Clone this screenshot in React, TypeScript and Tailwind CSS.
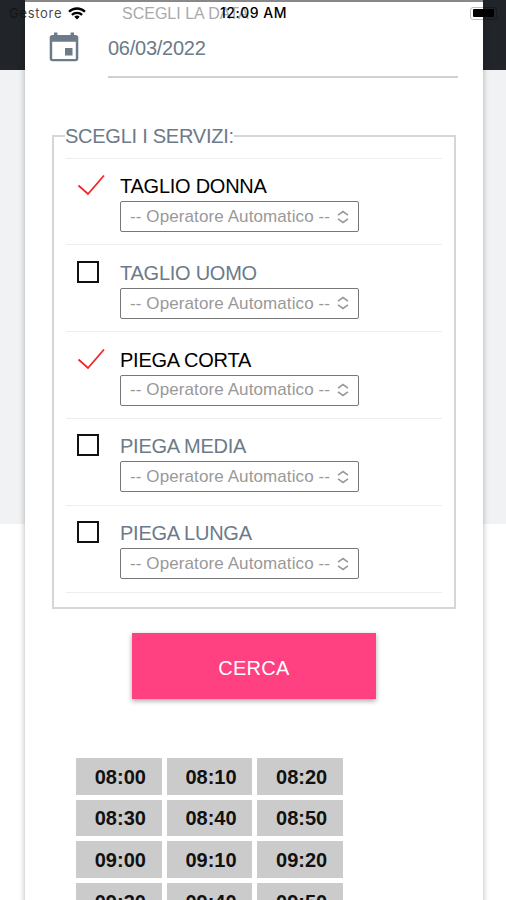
import React, { useState } from 'react'
import clsx from 'clsx'

type Service = { name: string; checked: boolean }

const initialServices: Service[] = [
  { name: 'TAGLIO DONNA', checked: true },
  { name: 'TAGLIO UOMO', checked: false },
  { name: 'PIEGA CORTA', checked: true },
  { name: 'PIEGA MEDIA', checked: false },
  { name: 'PIEGA LUNGA', checked: false },
]

const slots = [
  '08:00', '08:10', '08:20',
  '08:30', '08:40', '08:50',
  '09:00', '09:10', '09:20',
  '09:30', '09:40', '09:50',
]

const CalendarIcon = () => (
  <svg width="30" height="31" viewBox="0 0 30 31" className="shrink-0 text-[#6c7a89]">
    <path
      fill="currentColor"
      fillRule="evenodd"
      d="M5 .5h3.400V3h13.200V.5H25V3h1.500A2.800 2.800 0 0 1 29.300 5.800V26.500A2.800 2.800 0 0 1 26.500 29.300H3.500A2.800 2.800 0 0 1 .7 26.500V5.800A2.800 2.800 0 0 1 3.500 3H5zM3.200 9.700V27H26.800V9.700z"
    />
    <rect x="16" y="16" width="7.500" height="7.500" fill="currentColor" />
  </svg>
)

const WifiIcon = () => (
  <svg width="18" height="13" viewBox="0 0 18 13" className="fill-none stroke-black stroke-[2.300]">
    <path d="M1 4.800a11.400 11.400 0 0 1 16 0" />
    <path d="M3.900 7.900a7.300 7.300 0 0 1 10.200 0" />
    <path d="M6.300 9.800a4 4 0 0 1 5.400 0L9 12.600z" className="fill-black stroke-none" />
  </svg>
)

const StatusBar = () => (
  <div className="absolute inset-x-0 top-0 z-10 h-[26px] font-['Inter','Liberation_Sans',sans-serif] text-[13px] leading-[26px] text-black">
    <div className="flex items-center justify-between pr-[9px] pl-[9px]">
      <div className="flex items-center gap-[6px]">
        <span className="tracking-[0.7px] text-[#111]/80">Gestore</span>
        <WifiIcon />
      </div>
      <div className="flex h-[13px] w-[27px] items-center rounded-[3px] border border-black/25 pl-[2px]">
        <span className="h-[8px] w-[21px] rounded-[1px] bg-black" />
      </div>
    </div>
    <span className="absolute top-0 left-[220px] text-[14px] font-medium tracking-[0.5px] whitespace-nowrap">12:09 AM</span>
  </div>
)

const OperatorSelect = () => (
  <button className="flex h-[31px] w-[239px] items-center justify-between rounded-[2px] border border-[#777] bg-white pr-[9px] pl-[9px] text-[17px] text-[#999]">
    <span className="tracking-[0.100px] whitespace-nowrap">-- Operatore Automatico --</span>
    <svg width="12" height="14" viewBox="0 0 12 14" className="fill-none stroke-[#999] stroke-[1.600]">
      <path d="M1 5.200 6 1.500l5 3.700M1 8.800l5 3.700 5-3.700" />
    </svg>
  </button>
)

const ServiceRow = ({ service, onToggle }: { service: Service; onToggle: () => void }) => (
  <li className="flex h-[86.8px] border-b border-[#eee] pl-[11px]">
    <button onClick={onToggle} className="mt-[15.5px] flex h-[22px] w-[43px] items-start">
      {service.checked ? (
        <svg width="28" height="22" viewBox="0 0 28 22" className="fill-none stroke-[#f22828] stroke-[1.800]">
          <path d="M1.500 11.500 11 20 27 1.500" />
        </svg>
      ) : (
        <span className="size-[22px] border-2 border-[#111]" />
      )}
    </button>
    <div className="flex flex-col pt-[15.5px]">
      <span
        className={clsx(
          'h-[27px] text-[20px] leading-[24px] tracking-[-0.25px]',
          service.checked ? 'text-black' : 'text-[#6c7a89]',
        )}
      >
        {service.name}
      </span>
      <OperatorSelect />
    </div>
  </li>
)

const App = () => {
  const [services, setServices] = useState(initialServices)

  const toggle = (index: number) => {
    setServices(services.map((s, i) => (i === index ? { ...s, checked: !s.checked } : s)))
  }

  return (
    <div className="relative h-[900px] w-[506px] overflow-hidden bg-[linear-gradient(#212529_70px,#f1f2f4_70px,#f1f2f4_524px,#fff_524px)] font-['Liberation_Sans',Arial,sans-serif]">
      <StatusBar />
      <main className="ml-[25px] h-[960px] w-[458px] border-t-2 border-[#888] bg-white shadow-[0_0_6px_rgba(0,0,0,0.3)]">
        <div className="flex pl-[24px]">
          <div className="mt-[30px] w-[59px]">
            <CalendarIcon />
          </div>
          <div className="w-[350px] border-b-2 border-[#d0d0d0] pb-[16px]">
            <p className="pt-[2px] pl-[14px] text-[16px] leading-[20px] text-[#aaa]">SCEGLI LA DATA</p>
            <p className="mt-[12px] text-[20px] leading-[24px] tracking-[-0.25px] text-[#6c7a89]">06/03/2022</p>
          </div>
        </div>

        <fieldset className="mt-[46px] ml-[27px] h-[485px] w-[404px] border-2 border-[#d6d6d6] px-[11px]">
          <legend className="text-[20px] leading-[24px] tracking-[-0.25px] text-[#6c7a89]">SCEGLI I SERVIZI:</legend>
          <ul className="mt-[9.6px] mr-[1px] ml-px border-t border-[#eee]">
            {services.map((service, i) => (
              <ServiceRow key={service.name} service={service} onToggle={() => toggle(i)} />
            ))}
          </ul>
        </fieldset>

        <button className="mt-[24px] ml-[107px] flex h-[66px] w-[244px] items-center justify-center bg-[#ff4081] pt-[3px] text-[20px] tracking-[0.3px] text-white shadow-[0_2px_5px_rgba(0,0,0,0.35)]">
          CERCA
        </button>

        <div className="mt-[59px] ml-[51px] grid w-[267px] grid-cols-3 gap-[5px]">
          {slots.map((slot) => (
            <button key={slot} className="h-[36.6px] bg-[#cbcbcb] pt-[1px] pl-[3px] text-[20px] font-bold text-[#111]">
              {slot}
            </button>
          ))}
        </div>
      </main>
    </div>
  )
}

export default App
